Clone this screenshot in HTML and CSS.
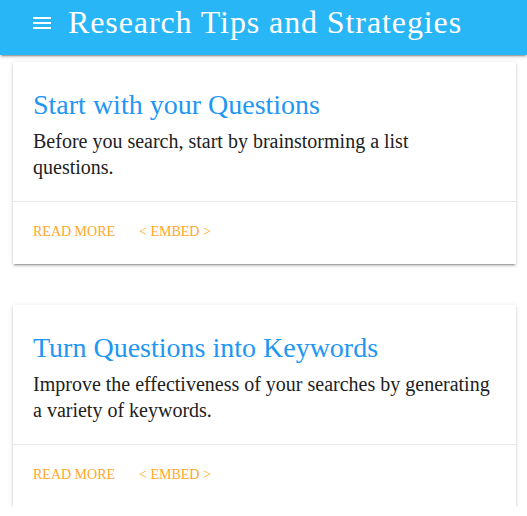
FILE: index.html
```html
<!DOCTYPE html>
<html lang="en">
<head>
<meta charset="utf-8">
<title>Research Tips and Strategies</title>
<link rel="stylesheet" href="styles.css">
</head>
<body>
<header class="appbar">
  <button class="menu-btn" aria-label="Menu">
    <svg viewBox="0 0 24 24" width="24" height="24"><path d="M3 18h18v-2H3v2zm0-5h18v-2H3v2zm0-7v2h18V6H3z" fill="#fff"/></svg>
  </button>
  <h1 class="appbar-title">Research Tips and Strategies</h1>
</header>
<main class="content">
  <article class="card">
    <div class="card-main">
      <h2 class="card-title">Start with your Questions</h2>
      <p class="card-text">Before you search, start by brainstorming a list<br>questions.</p>
    </div>
    <div class="card-actions">
      <a class="card-link" href="#">Read More</a>
      <a class="card-link" href="#">&lt; Embed &gt;</a>
    </div>
  </article>
  <article class="card">
    <div class="card-main">
      <h2 class="card-title">Turn Questions into Keywords</h2>
      <p class="card-text">Improve the effectiveness of your searches by generating a variety of keywords.</p>
    </div>
    <div class="card-actions">
      <a class="card-link" href="#">Read More</a>
      <a class="card-link" href="#">&lt; Embed &gt;</a>
    </div>
  </article>
</main>
</body>
</html>
```
FILE: styles.css
```css
* { box-sizing: border-box; }
html, body {
  margin: 0;
  padding: 0;
  background: #fff;
  font-family: "Liberation Serif", "Times New Roman", serif;
  color: #212121;
}
.appbar {
  height: 55px;
  background: #29b6f6;
  display: flex;
  align-items: flex-start;
  padding-left: 30px;
  box-shadow: 0 2px 2px rgba(0,0,0,.14), 0 3px 1px -2px rgba(0,0,0,.2), 0 1px 5px rgba(0,0,0,.12);
  position: relative;
  z-index: 1;
}
.menu-btn {
  border: 0;
  background: none;
  padding: 0;
  width: 24px;
  height: 24px;
  display: block;
  margin-top: 11px;
}
.menu-btn svg { display: block; }
.appbar-title {
  margin: 4px 0 0 14px;
  font-weight: 400;
  font-size: 32px;
  line-height: 36px;
  color: #fff;
  letter-spacing: 0.9px;
  white-space: nowrap;
}
.content {
  padding: 7px 11px 0 13px;
  display: flex;
  flex-direction: column;
  gap: 41px;
}
.card {
  background: #fff;
  box-shadow: 0 2px 2px rgba(0,0,0,.14), 0 3px 1px -2px rgba(0,0,0,.2), 0 1px 5px rgba(0,0,0,.12);
  height: 202px;
}
.card-main {
  padding: 27px 20px 0 20px;
  height: 140px;
  border-bottom: 1px solid #e8e8e8;
}
.card-title {
  margin: 0;
  font-weight: 400;
  font-size: 28px;
  line-height: 32px;
  color: #2196f3;
}
.card-text {
  margin: 7px 0 0;
  font-size: 20px;
  line-height: 26px;
  color: #212121;
}
.card-actions {
  padding: 20px 20px 0;
  display: flex;
  gap: 24px;
}
.card-link {
  font-size: 14px;
  line-height: 20px;
  text-transform: uppercase;
  color: #ffa726;
  text-decoration: none;
}
```
